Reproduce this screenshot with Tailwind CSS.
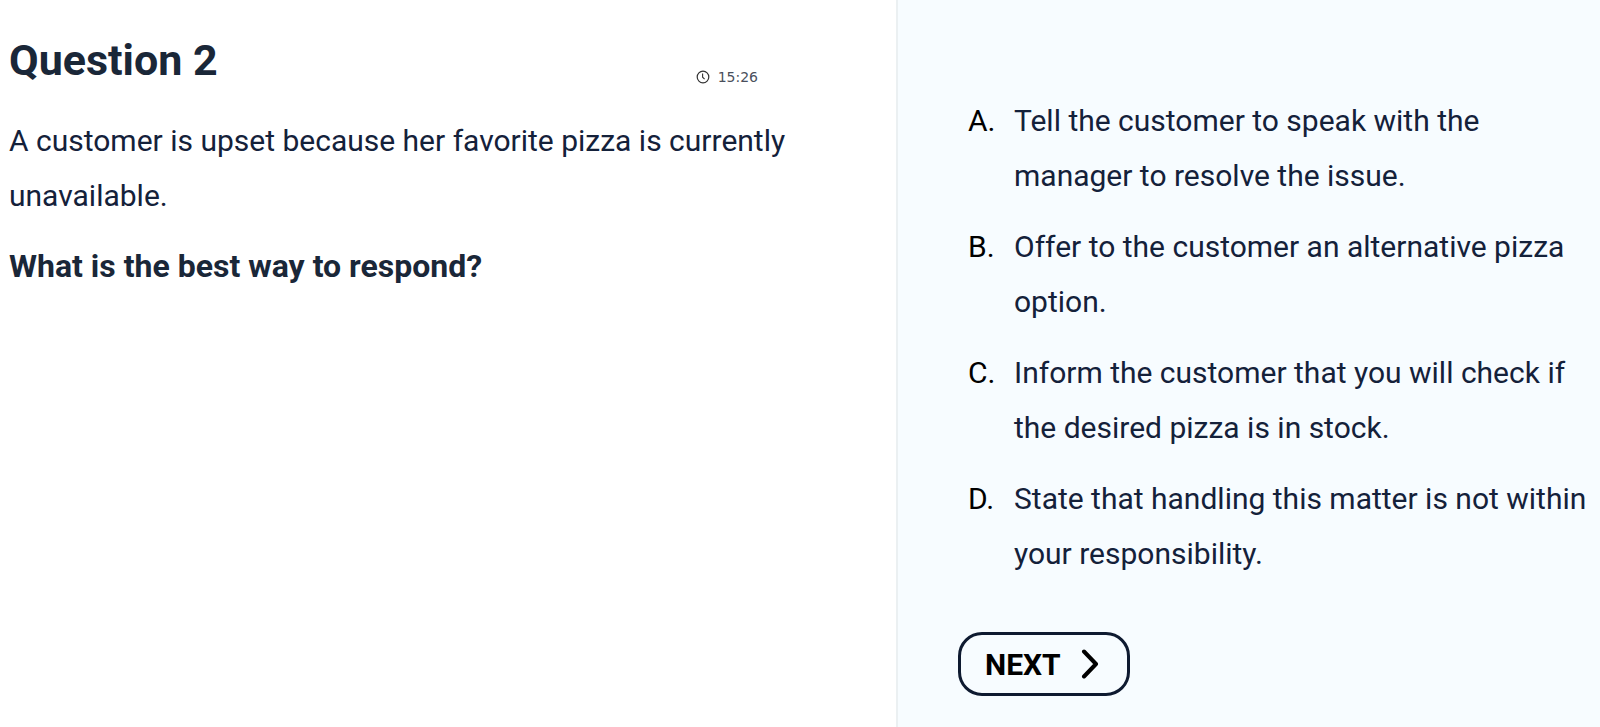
<!DOCTYPE html>
<html lang="en">
  <head>
    <meta charset="UTF-8" />
    <meta name="viewport" content="width=device-width, initial-scale=1.0" />
    <title>Question 2</title>
    <!-- Tailwind CSS CDN -->
    <script src="https://cdn.jsdelivr.net/npm/@tailwindcss/browser@4"></script>
  </head>
  <body class="min-h-screen flex bg-white font-['Roboto',sans-serif] text-[30px] leading-[55px] text-[#14213a]">
    <!-- Question -->
    <main class="w-[56%] pt-[31px] pl-[9px] pr-20">
      <div class="flex items-end justify-between pr-[58px]">
        <h1 class="text-[43px] leading-[58px] font-bold text-[#1a2738]">
          Question 2
        </h1>
        <div class="flex items-center gap-2 pb-0.5 text-sm leading-5 text-[#4a4f5c] font-['DejaVu_Sans',sans-serif]">
          <svg class="size-[14px]" viewBox="0 0 14 14" fill="none" stroke="#333" aria-hidden="true">
            <circle cx="7" cy="7" r="5.8" stroke-width="1.2" />
            <path d="M6.6 3.6v3.6l2 2" stroke-width="1.1" />
          </svg>
          <time>15:26</time>
        </div>
      </div>
      <p class="mt-6">
        A customer is upset because her favorite pizza is currently unavailable.
      </p>
      <p class="mt-4 text-[32px] font-bold text-[#1a2738]">What is the best way to respond?</p>
    </main>

    <!-- Answers -->
    <section class="flex-1 border-l-2 border-[#ebf0f2] bg-[#f7fcff] pt-[93px] pl-[60px]">
      <ol class="flex flex-col gap-4 pl-[10px]">
        <li class="flex">
          <span class="w-[46px] shrink-0 text-black">A.</span>
          <span>Tell the customer to speak with the <br />manager to resolve the issue.</span>
        </li>
        <li class="flex">
          <span class="w-[46px] shrink-0 text-black">B.</span>
          <span>Offer to the customer an alternative pizza option.</span>
        </li>
        <li class="flex">
          <span class="w-[46px] shrink-0 text-black">C.</span>
          <span>Inform the customer that you will check if the desired pizza is in stock.</span>
        </li>
        <li class="flex">
          <span class="w-[46px] shrink-0 text-black">D.</span>
          <span>State that handling this matter is not within your responsibility.</span>
        </li>
      </ol>
      <button
        type="button"
        class="mt-[51px] flex h-16 items-center gap-5 rounded-3xl border-3 border-[#0e1a30] pl-6 pr-7 font-bold text-black"
      >
        NEXT
        <svg class="h-[30px] w-[18px]" viewBox="0 0 18 30" fill="none" stroke="currentColor" stroke-width="4" stroke-linecap="round" stroke-linejoin="round" aria-hidden="true">
          <path d="M3 2.5L15 15L3 27.5" />
        </svg>
      </button>
    </section>
  </body>
</html>
